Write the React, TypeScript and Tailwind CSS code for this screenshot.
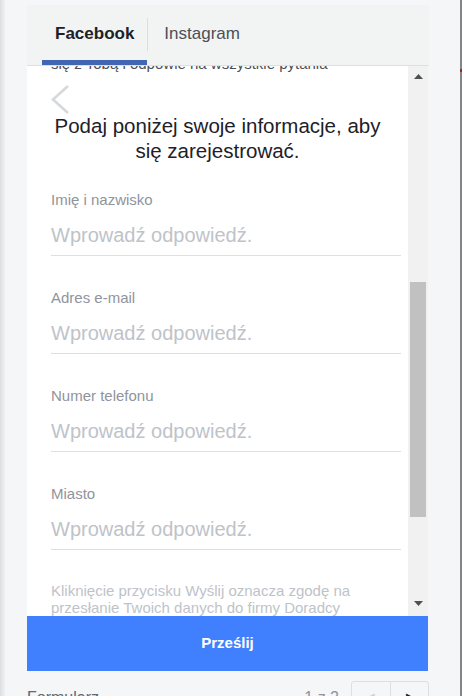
import { ReactNode } from "react";

const FIELDS = ["Imię i nazwisko", "Adres e-mail", "Numer telefonu", "Miasto"];

function Field({ label }: { label: string }) {
  return (
    <div className="mt-[33px] first:mt-0">
      <div className="text-[15px] leading-[17px] text-[#90949c]">{label}</div>
      <div className="mt-[15px] pb-[8px] border-b border-[#dddfe2] text-[20px] leading-[24px] text-[#bec3c9]">
        Wprowadź odpowiedź.
      </div>
    </div>
  );
}

function Arrow({ up }: { up?: boolean }) {
  return (
    <svg width="9" height="5" viewBox="0 0 9 5" className="mx-auto">
      <path d={up ? "M0 5 L4.5 0 L9 5Z" : "M0 0 L9 0 L4.5 5Z"} fill="#505050" />
    </svg>
  );
}

function Tab({ children, active }: { children: ReactNode; active?: boolean }) {
  return (
    <div
      className={`flex h-[60px] items-center pt-[3px] text-[17px] ${
        active
          ? "px-[13px] font-bold text-[#1d2129] border-b-[5px] border-[#4267b2]"
          : "px-[16px] pb-[5px] text-[#4b4f56]"
      }`}
    >
      {children}
    </div>
  );
}

export default function App() {
  return (
    <div className="flex h-[696px] w-[462px] overflow-hidden bg-[#f5f6f8] font-['Liberation_Sans',Arial,sans-serif]">
      {/* left shade */}
      <div className="w-[6px] shrink-0 bg-gradient-to-r from-[#dcdde0] to-[#f5f6f8]" />

      <div className="ml-[21px] w-[402px] shrink-0 pt-[5px]">
        {/* tabs */}
        <div className="flex h-[61px] items-start border-b border-[#dddfe2] bg-[#f2f3f3] pl-[15px]">
          <Tab active>Facebook</Tab>
          <div className="mt-[13px] h-[33px] w-px bg-[#dadde1]" />
          <Tab>Instagram</Tab>
        </div>

        {/* form body */}
        <div className="flex h-[550px]">
          <div className="w-[381px] overflow-hidden bg-white pl-[24px] pr-[7px]">
            <div className="-mt-[11px] whitespace-nowrap text-[15px] leading-[17px] text-[#4b4f56]">
              się z Tobą i odpowie na wszystkie pytania
            </div>
            <svg width="18" height="29" viewBox="0 0 18 29" className="mt-[13px] block">
              <polyline points="17,1 2,14.5 17,28" fill="none" stroke="#d5d8dc" strokeWidth="2.6" />
            </svg>
            <div className="-ml-[24px] -mr-[7px] -mt-[1px] text-center text-[20.5px] leading-[25px] text-[#1d2129]">
              Podaj poniżej swoje informacje, aby
              <br />
              się zarejestrować.
            </div>
            <div className="mt-[28px]">
              {FIELDS.map((f) => (
                <Field key={f} label={f} />
              ))}
            </div>
            <div className="mt-[32px] text-[15px] leading-[17px] text-[#bec3c9]">
              Kliknięcie przycisku Wyślij oznacza zgodę na przesłanie Twoich danych do firmy Doradcy
              Finansowi w celu przedstawienia oferty.
            </div>
          </div>

          {/* scrollbar */}
          <div className="flex w-[20px] flex-col bg-[#f1f1f1] pt-[8px] pb-[10px]">
            <Arrow up />
            <div className="mx-auto mt-[203px] h-[235px] w-[16px] bg-[#c1c1c1]" />
            <div className="flex-1" />
            <Arrow />
          </div>
        </div>

        {/* submit */}
        <button className="flex h-[55px] w-[401px] items-center justify-center bg-[#4080ff] text-[15px] font-bold text-white">
          Prześlij
        </button>

        {/* pagination */}
        <div className="mt-[10px] flex w-[402px] items-start">
          <div className="pt-[7px] text-[16px] leading-[20px] text-[#606770]">Formularz</div>
          <div className="flex-1" />
          <div className="pt-[7px] text-[16px] leading-[20px] text-[#90949c]">1 z 2</div>
          <div className="ml-[12px] flex h-[28px] rounded-t-[3px] border border-[#dddfe2] bg-[#f5f6f7]">
            <div className="flex w-[38px] justify-center pt-[10px] text-[10px] leading-none text-[#ccd0d5]">◀</div>
            <div className="flex w-[38px] justify-center border-l border-[#dddfe2] pt-[10px] text-[10px] leading-none text-[#1d2129]">▶</div>
          </div>
        </div>
      </div>

      <div className="flex-1" />
      {/* right edge */}
      <div className="flex w-[2px] shrink-0 flex-col bg-[#858585]">
        <div className="mt-[69px] h-[3px] bg-[#b02020]" />
      </div>
    </div>
  );
}
